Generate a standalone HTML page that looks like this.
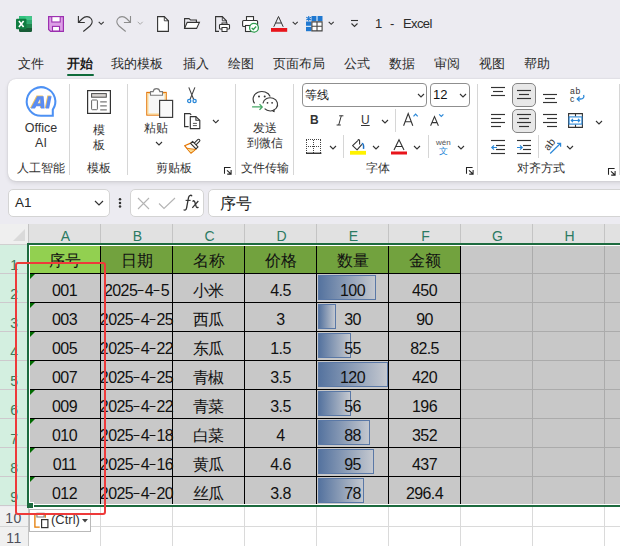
<!DOCTYPE html>
<html><head><meta charset="utf-8">
<style>
*{margin:0;padding:0;box-sizing:border-box}
html,body{width:620px;height:546px;overflow:hidden;background:#ecebf1;font-family:"Liberation Sans",sans-serif;color:#262626}
.a{position:absolute}
svg{position:absolute;overflow:visible}
.tab{position:absolute;top:56px;font-size:13px;line-height:16px;color:#2b2b2b;white-space:nowrap}
.rib{position:absolute;left:8px;top:79px;width:640px;height:102px;background:#fff;border-radius:8px;box-shadow:0 2px 4px rgba(0,0,0,.10),0 0 1.5px rgba(0,0,0,.16)}
.sep{position:absolute;width:1px;background:#d6d6d6}
.lbl{position:absolute;font-size:12px;line-height:14px;color:#333;white-space:nowrap}
.chev{position:absolute}
.box{position:absolute;background:#fff;border:1px solid #c9c9c9;border-radius:4px}
.ch{position:absolute;top:224px;height:19px;background:#e1e1e1;font-size:14px;line-height:24px;padding-left:2px;text-align:center;color:#2b7a62}
.rh{position:absolute;left:0;width:28px;background:#d5efe1;font-size:14px;text-align:right;padding-right:3px;color:#3d7a5b;border-bottom:1px solid #c8c8c8}
.c{position:absolute;font-size:16px;text-align:center;white-space:nowrap;color:#111}
.rhn{font-size:14px;text-align:right;padding-right:10px;color:#3a7a5c;background:#d3efe0}
.rhg{font-size:14px;text-align:right;padding-right:6px;letter-spacing:0.6px;color:#4f4f5a;background:#f0f0f0}
.bar{background:linear-gradient(to right,#55739f,#c4c8cf);border:1px solid #5a78a6}
.hz{font-size:16px}
.nm{letter-spacing:-0.6px}
.hy{display:inline-block;width:7px;height:1.2px;background:#111;vertical-align:5px;margin:0 0.3px 0 0.3px;transform:scaleX(.85)}
</style></head><body>

<!-- ===== Title bar ===== -->
<svg style="left:16px;top:16px" width="16" height="16" viewBox="0 0 16 16">
 <rect x="3" y="0" width="13" height="16" rx="1.2" fill="#185c37"/>
 <path d="M3 1.2 Q3 0 4.2 0 H14.8 Q16 0 16 1.2 V4 H3 Z" fill="#33c481"/>
 <rect x="3" y="4" width="13" height="4" fill="#21a366"/>
 <rect x="3" y="8" width="13" height="4" fill="#107c41"/>
 <rect x="9.5" y="0" width="6.5" height="12" fill="#fff" opacity="0.08"/>
 <rect x="0" y="2.8" width="10.5" height="10.5" rx="1" fill="#107c41"/>
 <path d="M2.9 5 L7.6 11.1 M7.6 5 L2.9 11.1" stroke="#fff" stroke-width="1.6"/>
</svg>
<svg style="left:48px;top:16px" width="16" height="16" viewBox="0 0 16 16">
 <path d="M0.6 0.6 H15.4 V15.4 H2.6 L0.6 13.4 Z" fill="#dc9fe6" stroke="#9c2fb0" stroke-width="1.2"/>
 <rect x="3.8" y="0.6" width="8.4" height="5.4" fill="#fff" stroke="#9c2fb0" stroke-width="1.1"/>
 <rect x="4.5" y="10.4" width="7" height="4.6" fill="#fff" stroke="#9c2fb0" stroke-width="1.1"/>
</svg>
<!-- undo -->
<svg style="left:77px;top:16px" width="16" height="16" viewBox="0 0 16 16">
 <path d="M1.4 0 V6.5 H7.8" fill="none" stroke="#333" stroke-width="1.1"/>
 <path d="M1.4 6.5 L5.5 2.5 C8 0 12 0 14 2.5 C16 5 15 8 13 10 L6.3 15.5" fill="none" stroke="#333" stroke-width="1.1"/>
</svg>
<svg style="left:98px;top:21px" width="7" height="5" viewBox="0 0 7 5"><path d="M0.7 0.8 L3.2 3.3 L5.7 0.8" fill="none" stroke="#333" stroke-width="1.1"/></svg>
<!-- redo -->
<svg style="left:116px;top:16px" width="16" height="16" viewBox="0 0 16 16">
 <path d="M14.5 0 V6.5 H7.9" fill="none" stroke="#8c8c8c" stroke-width="1.1"/>
 <path d="M14.5 6.5 L10.5 2.5 C8 0 4 0 2 2.5 C0 5 1 8 3 10 L9.7 15.5" fill="none" stroke="#8c8c8c" stroke-width="1.1"/>
</svg>
<svg style="left:137px;top:21px" width="7" height="5" viewBox="0 0 7 5"><path d="M0.7 0.8 L3.2 3.3 L5.7 0.8" fill="none" stroke="#aaa" stroke-width="1"/></svg>
<!-- new doc -->
<svg style="left:157px;top:16px" width="12" height="16" viewBox="0 0 12 16">
 <path d="M0.6 0.6 H7.3 L11.4 4.8 V15.4 H0.6 Z" fill="#fff" stroke="#333" stroke-width="1.1"/>
 <path d="M7.3 0.6 V4.8 H11.4" fill="none" stroke="#333" stroke-width="0.9"/>
</svg>
<!-- open -->
<svg style="left:184px;top:18px" width="16" height="11" viewBox="0 0 16 11">
 <path d="M0.6 10.4 V0.6 H5 L6.5 2 H12.4 V4.4" fill="none" stroke="#333" stroke-width="1.1"/>
 <path d="M0.6 10.4 L3.2 4.4 H15.4 L12.6 10.4 Z" fill="#fff" stroke="#333" stroke-width="1.1"/>
</svg>
<!-- print preview -->
<svg style="left:215px;top:16px" width="15" height="16" viewBox="0 0 15 16">
 <path d="M4 15.4 H0.6 V0.6 H7.3 L11.4 4.8 V7" fill="none" stroke="#333" stroke-width="1.1"/>
 <path d="M7.3 0.6 V4.8 H11.4" fill="none" stroke="#333" stroke-width="0.9"/>
 <rect x="7" y="7" width="5" height="2" fill="#fff" stroke="#333" stroke-width="1"/>
 <rect x="4.5" y="8.5" width="10" height="4.5" rx="0.8" fill="#fff" stroke="#333" stroke-width="1.1"/>
 <rect x="7" y="11.5" width="5" height="4" fill="#fff" stroke="#333" stroke-width="1"/>
</svg>
<!-- print with check -->
<svg style="left:242px;top:16px" width="17" height="17" viewBox="0 0 17 17">
 <rect x="4.5" y="0.6" width="7" height="4" fill="#fff" stroke="#333" stroke-width="1.1"/>
 <rect x="0.6" y="4.5" width="15" height="6" rx="1" fill="#fff" stroke="#333" stroke-width="1.1"/>
 <rect x="3.5" y="9.5" width="6" height="6" fill="#fff" stroke="#333" stroke-width="1.1"/>
 <circle cx="12" cy="11.8" r="4.4" fill="#fff" stroke="#2e9e4f" stroke-width="1.3"/>
 <path d="M9.7 11.9 L11.3 13.5 L14.2 10.5" fill="none" stroke="#2e9e4f" stroke-width="1.3"/>
</svg>
<!-- font color -->
<svg style="left:270px;top:16px" width="18" height="17" viewBox="0 0 18 17">
 <path d="M3.8 10.8 L8.5 0.5 L13.2 10.8 M5.6 7 H11.4" fill="none" stroke="#333" stroke-width="1"/>
 <rect x="1" y="12" width="16.2" height="3.8" fill="#e8141b"/>
</svg>
<svg style="left:292px;top:21px" width="7" height="5" viewBox="0 0 7 5"><path d="M0.7 0.8 L3.2 3.3 L5.7 0.8" fill="none" stroke="#333" stroke-width="1.1"/></svg>
<!-- table w/ freeze -->
<svg style="left:306px;top:16px" width="17" height="16" viewBox="0 0 17 16">
 <rect x="5.5" y="0" width="11" height="5" fill="#1f78d1"/>
 <rect x="0" y="5.5" width="5.5" height="9.7" fill="#1f78d1"/>
 <path d="M11 0 V5 M0 10.3 H5.5" stroke="#fff" stroke-width="1"/>
 <path d="M5.9 5.9 H16.1 V14.9 H5.9 Z M11 5.9 V14.9 M5.9 10.3 H16.1" fill="#fff" stroke="#444" stroke-width="1.1"/>
 <path d="M2.7 0 V5.2 M0.3 1.3 L5.1 3.9 M5.1 1.3 L0.3 3.9" stroke="#1f78d1" stroke-width="1.1"/>
</svg>
<svg style="left:328px;top:21px" width="7" height="5" viewBox="0 0 7 5"><path d="M0.7 0.8 L3.2 3.3 L5.7 0.8" fill="none" stroke="#333" stroke-width="1.1"/></svg>
<!-- customize qat -->
<svg style="left:350px;top:19px" width="9" height="9" viewBox="0 0 9 9">
 <path d="M1 1.5 H8" stroke="#333" stroke-width="1.1"/><path d="M1.5 4.5 L4.5 7.5 L7.5 4.5" fill="none" stroke="#333" stroke-width="1.1"/>
</svg>
<div class="a" style="left:375px;top:16px;font-size:13px;line-height:16px;color:#2b2b2b;white-space:pre">1</div><div class="a" style="left:390px;top:16px;font-size:13px;line-height:16px;color:#2b2b2b">-</div><div class="a" style="left:403px;top:16px;font-size:13px;line-height:16px;color:#2b2b2b;letter-spacing:-0.6px">Excel</div>

<!-- ===== Tabs ===== -->
<div class="tab" style="left:18px">文件</div>
<div class="tab" style="left:67px;font-weight:bold;color:#1b1b1b">开始</div>
<div class="a" style="left:67px;top:74px;width:27px;height:2px;background:#0f6b3b;border-radius:1px"></div>
<div class="tab" style="left:111px">我的模板</div>
<div class="tab" style="left:183px">插入</div>
<div class="tab" style="left:228px">绘图</div>
<div class="tab" style="left:273px">页面布局</div>
<div class="tab" style="left:344px">公式</div>
<div class="tab" style="left:389px">数据</div>
<div class="tab" style="left:434px">审阅</div>
<div class="tab" style="left:479px">视图</div>
<div class="tab" style="left:524px">帮助</div>

<!-- ===== Ribbon ===== -->
<div class="rib"></div>
<!-- RIBBON_START -->
<!-- separators -->
<div class="sep" style="left:69px;top:84px;height:91px"></div>
<div class="sep" style="left:127px;top:84px;height:91px"></div>
<div class="sep" style="left:235px;top:84px;height:91px"></div>
<div class="sep" style="left:293px;top:84px;height:91px"></div>
<div class="sep" style="left:477px;top:84px;height:91px"></div>
<div class="sep" style="left:619px;top:84px;height:91px"></div>
<div class="sep" style="left:343px;top:135px;height:23px"></div>
<div class="sep" style="left:395px;top:109px;height:23px"></div>
<div class="sep" style="left:428px;top:135px;height:23px"></div>
<div class="sep" style="left:538px;top:135px;height:23px"></div>

<!-- Office AI -->
<svg style="left:25px;top:86px" width="33" height="33" viewBox="0 0 33 33">
 <path d="M16 29.8 A14.3 14.3 0 1 1 27.8 23.6 L27.8 29.8 Z" fill="#fff" stroke="#4d91f4" stroke-width="2.05" stroke-linejoin="miter"/>
 <g transform="translate(-0.8 -0.6)" fill="#f3c35a"><path fill-rule="evenodd" d="M5.8 22.6 L12.3 10.2 H18.6 L19.6 22.6 H15.9 L15.7 20.3 H11.3 L10 22.6 Z M12.6 17.4 H15.5 L15.2 12.8 Z"/><path d="M20.6 22.6 L23.1 10.2 H26.6 L24.1 22.6 Z"/></g>
 <g fill="#5a8cf2"><path fill-rule="evenodd" d="M5.8 22.6 L12.3 10.2 H18.6 L19.6 22.6 H15.9 L15.7 20.3 H11.3 L10 22.6 Z M12.6 17.4 H15.5 L15.2 12.8 Z"/><path d="M20.6 22.6 L23.1 10.2 H26.6 L24.1 22.6 Z"/></g>
</svg>
<div class="lbl" style="left:24px;top:121px;font-size:12.5px;width:34px;text-align:center">Office</div>
<div class="lbl" style="left:24px;top:136px;font-size:12.5px;width:34px;text-align:center">AI</div>
<div class="lbl" style="left:17px;top:161px">人工智能</div>

<!-- Template -->
<svg style="left:87px;top:90px" width="24" height="24" viewBox="0 0 24 24">
 <rect x="0.6" y="0.6" width="22.8" height="22.8" fill="#fff" stroke="#333" stroke-width="1.2"/>
 <rect x="4.6" y="3.6" width="14.7" height="3.6" fill="#d9d5d2" stroke="#4a4a4a" stroke-width="1"/>
 <rect x="4.6" y="10" width="5.8" height="9.7" rx="0.8" fill="#fff" stroke="#666" stroke-width="1"/>
 <path d="M13.2 11.9 H19.8 M13.2 15.8 H19.8 M13.2 19.9 H19.8" stroke="#7a7a7a" stroke-width="1.3"/>
</svg>
<div class="lbl" style="left:93px;top:123px">模</div>
<div class="lbl" style="left:93px;top:138px">板</div>
<div class="lbl" style="left:87px;top:161px">模板</div>

<!-- Clipboard -->
<svg style="left:145px;top:87px" width="30" height="32" viewBox="0 0 30 32">
 <rect x="1.8" y="5.4" width="19.4" height="22.7" fill="#f7f7f7" stroke="#e46f00" stroke-width="1.1"/>
 <rect x="2.9" y="6.5" width="17.2" height="20.5" fill="none" stroke="#fbd78c" stroke-width="1.1"/>
 <path d="M5.5 8.3 V4.6 H8.2 C8.6 0.6 14.4 0.6 14.8 4.6 H17.5 V8.3 Z" fill="#fff" stroke="#7a7a7a" stroke-width="1.1"/>
 <rect x="14.6" y="13.4" width="13" height="17" fill="#f9f9f9" stroke="#3d3d3d" stroke-width="1.2"/>
</svg>
<div class="lbl" style="left:144px;top:121px">粘贴</div>
<svg style="left:155px;top:141px" width="8" height="5" viewBox="0 0 8 5"><path d="M1 1 L4 4 L7 1" fill="none" stroke="#333" stroke-width="1.1"/></svg>
<!-- scissors -->
<svg style="left:186px;top:87px" width="12" height="16" viewBox="0 0 12 16">
 <path d="M2.8 0.4 L7.6 12.3 M8.9 0.4 L4.1 12.3" stroke="#444" stroke-width="1.1"/>
 <circle cx="3.2" cy="14" r="1.6" fill="#fff" stroke="#2b88d8" stroke-width="1.3"/>
 <circle cx="8.6" cy="14" r="1.6" fill="#fff" stroke="#2b88d8" stroke-width="1.3"/>
</svg>
<!-- copy -->
<svg style="left:184px;top:113px" width="17" height="17" viewBox="0 0 17 17">
 <path d="M4.6 13.6 H0.6 V0.6 H5.9 L7.2 1.9" fill="none" stroke="#333" stroke-width="1.15"/>
 <path d="M6.3 3.6 H11.9 L15.8 7.3 V15.6 H6.3 Z" fill="#fff" stroke="#333" stroke-width="1.15" stroke-linejoin="round"/>
 <path d="M11.9 3.6 V7.3 H15.8" fill="none" stroke="#333" stroke-width="1.05"/>
 <path d="M8.9 10.4 H12.9 M8.9 12.6 H12.9" stroke="#444" stroke-width="0.9"/>
</svg>
<svg style="left:212px;top:119px" width="8" height="5" viewBox="0 0 8 5"><path d="M1 1 L3.8 3.8 L6.6 1" fill="none" stroke="#333" stroke-width="1.15"/></svg>
<!-- format painter -->
<svg style="left:184px;top:139px" width="17" height="16" viewBox="0 0 17 16">
 <path d="M0.6 6.7 L6.7 4.1 L12.2 9.8 L6.9 14.2 Z" fill="#fff" stroke="#e37400" stroke-width="1.15" stroke-linejoin="round"/>
 <path d="M3.2 9.6 L11 10.6 L6.9 13.6 Z" fill="#f9d98e"/>
 <path d="M2.6 9.2 L11.2 10.4" stroke="#e37400" stroke-width="0.9"/>
 <path d="M10.6 5.6 L14.6 1.6" stroke="#333" stroke-width="3.6" stroke-linecap="round"/>
 <path d="M10.6 5.6 L14.6 1.6" stroke="#fff" stroke-width="1.4" stroke-linecap="round"/>
 <path d="M6.6 4.4 L8.6 2.4 L14 7.8 L12 9.8 Z" fill="#fff" stroke="#333" stroke-width="1.15" stroke-linejoin="round"/>
</svg>
<div class="lbl" style="left:156px;top:161px">剪贴板</div>
<svg style="left:224px;top:167px" width="9" height="9" viewBox="0 0 9 9">
 <path d="M0.5 6.8 V0.5 H6.6" fill="none" stroke="#222" stroke-width="1.05"/><path d="M3 3.4 L7 7 M7.1 3 V7.1 H3.2" fill="none" stroke="#222" stroke-width="1.05"/>
</svg>

<!-- WeChat -->
<svg style="left:251px;top:91px" width="28" height="22" viewBox="0 0 28 22">
 <path d="M3.6 12.3 A8.8 7.6 0 1 1 19.2 5.5" fill="none" stroke="#3a3a3a" stroke-width="1.15"/>
 <circle cx="8" cy="5.5" r="1" fill="#333"/><circle cx="13.7" cy="5.5" r="1" fill="#333"/>
 <path d="M11.9 12.3 A7.4 6.6 0 1 1 13.6 17.7" fill="none" stroke="#3a3a3a" stroke-width="1.15"/>
 <path d="M21.2 19.6 L23.2 20.9 L23 18.3" fill="none" stroke="#3a3a3a" stroke-width="1"/>
 <circle cx="16.5" cy="11.8" r="0.9" fill="#333"/><circle cx="21.1" cy="11.8" r="0.9" fill="#333"/>
 <path d="M1.1 15.9 H11 M8.5 13.1 L11.2 15.9 L8.5 18.9" fill="none" stroke="#45a865" stroke-width="1.35"/>
</svg>
<div class="lbl" style="left:253px;top:121px">发送</div>
<div class="lbl" style="left:247px;top:136px">到微信</div>
<div class="lbl" style="left:241px;top:161px">文件传输</div>

<!-- Font group -->
<div class="box" style="left:302px;top:83px;width:125px;height:24px;border-color:#8f8f8f"></div>
<div class="lbl" style="left:305px;top:88px;font-size:12px;color:#111">等线</div>
<svg style="left:417px;top:93px" width="8" height="5" viewBox="0 0 8 5"><path d="M1 1 L4 4 L7 1" fill="none" stroke="#333" stroke-width="1.1"/></svg>
<div class="box" style="left:430px;top:83px;width:40px;height:24px;border-color:#8f8f8f"></div>
<div class="lbl" style="left:433px;top:88px;font-size:13px;color:#111">12</div>
<svg style="left:459px;top:93px" width="8" height="5" viewBox="0 0 8 5"><path d="M1 1 L4 4 L7 1" fill="none" stroke="#333" stroke-width="1.1"/></svg>

<div class="lbl" style="left:310px;top:113px;font-size:12px;font-weight:bold">B</div>
<svg style="left:336px;top:115px" width="8" height="11" viewBox="0 0 8 11"><path d="M3.2 0.8 H7.4 M0.6 10 H4.8 M5.3 0.8 L2.7 10" fill="none" stroke="#333" stroke-width="1"/></svg>
<div class="lbl" style="left:361px;top:113px;font-size:12px;text-decoration:underline">U</div>
<svg style="left:381px;top:119px" width="8" height="5" viewBox="0 0 8 5"><path d="M1 1 L4 4 L7 1" fill="none" stroke="#333" stroke-width="1.1"/></svg>
<svg style="left:403px;top:113px" width="16" height="14" viewBox="0 0 16 14"><path d="M0.6 12.8 L5.2 0.6 L9.8 12.8 M2.2 8.7 H8.2" fill="none" stroke="#333" stroke-width="1.1"/><path d="M10.5 3.4 L12.6 1.2 L14.7 3.4" fill="none" stroke="#2b88d8" stroke-width="1.2"/></svg>
<svg style="left:430px;top:113px" width="16" height="14" viewBox="0 0 16 14"><path d="M0.6 12.8 L4.5 3.6 L8.4 12.8 M1.9 9.6 H7.1" fill="none" stroke="#333" stroke-width="1.05"/><path d="M9.2 1.3 L11.3 3.4 L13.4 1.3" fill="none" stroke="#2b88d8" stroke-width="1.2"/></svg>

<svg style="left:306px;top:139px" width="16" height="16" viewBox="0 0 16 16">
 <path d="M0 0.5 H15 M0 7.5 H15 M0.5 1 V14 M7.5 1 V14 M14.5 1 V14" fill="none" stroke="#444" stroke-width="1" stroke-dasharray="1 1"/>
 <rect x="0" y="13.6" width="15.4" height="1.3" fill="#222"/>
</svg>
<svg style="left:329px;top:145px" width="8" height="5" viewBox="0 0 8 5"><path d="M1 1 L4 4 L7 1" fill="none" stroke="#333" stroke-width="1.1"/></svg>
<svg style="left:350px;top:139px" width="17" height="16" viewBox="0 0 17 16">
 <path d="M7.6 1.8 L2.6 6.7 L7.1 10.9 L11.9 5.3" fill="#fff" stroke="#333" stroke-width="1.1" stroke-linejoin="round"/>
 <path d="M7.6 1.8 Q8.6 -0.4 9.6 1.4 V5.4" fill="none" stroke="#333" stroke-width="1.1"/>
 <path d="M11.8 4.6 C13.3 4.3 13.9 6.5 13.5 9.8" fill="none" stroke="#1a6fc4" stroke-width="1.5"/>
 <rect x="0" y="11.9" width="16" height="3.8" fill="#fff200"/>
</svg>
<svg style="left:372px;top:145px" width="8" height="5" viewBox="0 0 8 5"><path d="M1 1 L4 4 L7 1" fill="none" stroke="#333" stroke-width="1.1"/></svg>
<svg style="left:391px;top:139px" width="16" height="16" viewBox="0 0 16 16">
 <path d="M3 11 L8 0.8 L13 11 M4.8 7.5 H11.2" fill="none" stroke="#333" stroke-width="1.1"/>
 <rect x="0" y="12.5" width="16" height="3" fill="#e8141b"/>
</svg>
<svg style="left:413px;top:145px" width="8" height="5" viewBox="0 0 8 5"><path d="M1 1 L4 4 L7 1" fill="none" stroke="#333" stroke-width="1.1"/></svg>
<div class="lbl" style="left:436px;top:138px;font-size:8px;line-height:9px;color:#555">wén</div>
<div class="lbl" style="left:439px;top:147px;font-size:9px;line-height:9px;color:#2b88d8">文</div>
<svg style="left:457px;top:145px" width="8" height="5" viewBox="0 0 8 5"><path d="M1 1 L4 4 L7 1" fill="none" stroke="#333" stroke-width="1.1"/></svg>
<div class="lbl" style="left:366px;top:161px">字体</div>
<svg style="left:466px;top:167px" width="9" height="9" viewBox="0 0 9 9">
 <path d="M0.5 6.8 V0.5 H6.6" fill="none" stroke="#222" stroke-width="1.05"/><path d="M3 3.4 L7 7 M7.1 3 V7.1 H3.2" fill="none" stroke="#222" stroke-width="1.05"/>
</svg>

<!-- Alignment group -->
<div class="a" style="left:512px;top:83px;width:24px;height:24px;background:#e8e8e8;border:1px solid #858585;border-radius:5px"></div>
<div class="a" style="left:512px;top:109px;width:24px;height:24px;background:#e8e8e8;border:1px solid #858585;border-radius:5px"></div>
<svg style="left:0;top:0" width="620" height="180" viewBox="0 0 620 180"><g stroke="#333" stroke-width="1.15" fill="none"><path d="M491 87.5 H505"/><path d="M493 91.5 H503"/><path d="M491 95.5 H505"/><path d="M517 90.5 H531"/><path d="M519 94.5 H529"/><path d="M517 98.5 H531"/><path d="M543 94.5 H557"/><path d="M545 98.5 H555"/><path d="M543 102.5 H557"/><path d="M491 114.5 H505"/><path d="M491 118.5 H501"/><path d="M491 122.5 H505"/><path d="M491 126.5 H501"/><path d="M517 114.5 H531"/><path d="M519 118.5 H529"/><path d="M517 122.5 H531"/><path d="M519 126.5 H529"/><path d="M543 114.5 H557"/><path d="M547 118.5 H557"/><path d="M543 122.5 H557"/><path d="M547 126.5 H557"/><path d="M491 140.5 H505"/><path d="M496 145.5 H505"/><path d="M496 149.5 H505"/><path d="M491 153.5 H505"/><path d="M517 140.5 H531"/><path d="M523 145.5 H531"/><path d="M523 149.5 H531"/><path d="M517 153.5 H531"/></g>
<path d="M497 147.5 H491.8 M494 145.3 L491.8 147.5 L494 149.7" fill="none" stroke="#2b88d8" stroke-width="1.2"/>
<path d="M517 147.5 H522.2 M520 145.3 L522.2 147.5 L520 149.7" fill="none" stroke="#2b88d8" stroke-width="1.2"/>
</svg>
<svg style="left:569px;top:87px" width="17" height="17" viewBox="0 0 17 17">
 <text x="1" y="7.4" font-family="Liberation Sans" font-size="8.6" letter-spacing="0.6" fill="#333">ab</text>
 <text x="1" y="14.7" font-family="Liberation Sans" font-size="8.6" fill="#333">c</text>
 <path d="M8.3 12 H11.5 C14 12 15.6 10.5 14.6 8" fill="none" stroke="#2b88d8" stroke-width="1.3"/>
 <path d="M10.6 9.6 L8.2 12 L10.6 14.4" fill="none" stroke="#2b88d8" stroke-width="1.3"/>
</svg>
<svg style="left:568px;top:113px" width="16" height="16" viewBox="0 0 16 16">
 <path d="M0.6 0.6 H14.4 V14.4 H0.6 Z M7.5 0.6 V3.6 M7.5 11.4 V14.4" fill="#fff" stroke="#333" stroke-width="1.1"/>
 <rect x="1.1" y="3.9" width="12.8" height="7.2" fill="#fff" stroke="#2b88d8" stroke-width="1.1"/>
 <path d="M3.3 7.5 H11.7 M5 5.8 L3.3 7.5 L5 9.2 M10 5.8 L11.7 7.5 L10 9.2" fill="none" stroke="#2b88d8" stroke-width="1.2"/>
</svg>
<svg style="left:595px;top:120px" width="8" height="5" viewBox="0 0 8 5"><path d="M1 1 L4 4 L7 1" fill="none" stroke="#333" stroke-width="1.1"/></svg>
<svg style="left:544px;top:137px" width="18" height="18" viewBox="0 0 18 18">
 <text x="0" y="0" transform="translate(4.6 14.2) rotate(-52)" font-family="Liberation Sans" font-size="10.5" fill="#333">ab</text>
 <path d="M6.2 16.5 L16.4 6.5 M13.1 6.3 H16.6 V9.8" fill="none" stroke="#2b88d8" stroke-width="1.2"/>
</svg>
<svg style="left:566px;top:145px" width="8" height="5" viewBox="0 0 8 5"><path d="M1 1 L4 4 L7 1" fill="none" stroke="#333" stroke-width="1.1"/></svg>
<div class="lbl" style="left:517px;top:161px">对齐方式</div>
<svg style="left:608px;top:168px" width="9" height="9" viewBox="0 0 9 9">
 <path d="M0.5 6.8 V0.5 H6.6" fill="none" stroke="#222" stroke-width="1.05"/><path d="M3 3.4 L7 7 M7.1 3 V7.1 H3.2" fill="none" stroke="#222" stroke-width="1.05"/>
</svg>
<!-- RIBBON_END -->

<!-- ===== Formula bar ===== -->
<!-- FORMULA_START -->
<div class="box" style="left:8px;top:189px;width:102px;height:28px;border-color:#d4d4d4;border-radius:5px"></div>
<div class="a" style="left:15px;top:195px;font-size:13.5px;line-height:16px;color:#262626">A1</div>
<svg style="left:94px;top:200px" width="10" height="6" viewBox="0 0 10 6"><path d="M1 1 L5 5 L9 1" fill="none" stroke="#333" stroke-width="1.2"/></svg>
<svg style="left:118px;top:197px" width="4" height="12" viewBox="0 0 4 12"><circle cx="2" cy="2.3" r="1.25" fill="#333"/><circle cx="2" cy="5.9" r="1.25" fill="#333"/><circle cx="2" cy="9.5" r="1.25" fill="#333"/></svg>
<div class="box" style="left:130px;top:189px;width:74px;height:28px;border-color:#d4d4d4;border-radius:5px"></div>
<svg style="left:137px;top:197px" width="13" height="13" viewBox="0 0 13 13"><path d="M1 1 L12 12 M12 1 L1 12" stroke="#b4b4b4" stroke-width="1.1"/></svg>
<svg style="left:158px;top:197px" width="18" height="13" viewBox="0 0 18 13"><path d="M1 6.5 L6 11.5 L17 1" fill="none" stroke="#b4b4b4" stroke-width="1.1"/></svg>
<svg style="left:183px;top:194px" width="17" height="18" viewBox="0 0 17 18">
 <path d="M9 2.3 C8.3 0.8 6.3 0.8 5.6 3.2 L3.6 13.8 C3.1 16.3 1.6 16.6 0.6 15.6" fill="none" stroke="#333" stroke-width="1.3"/>
 <path d="M2.6 6.4 H7.6" stroke="#333" stroke-width="1.1"/>
 <path d="M9.6 7.6 C10.6 6.3 11.4 6.6 11.8 8 L13.2 12.6 C13.6 14 14.5 14 15.4 13" fill="none" stroke="#333" stroke-width="1.3"/>
 <path d="M15.3 7 L9.3 13.9" stroke="#333" stroke-width="1.2"/>
</svg>
<div class="box" style="left:208px;top:189px;width:430px;height:28px;border-color:#d4d4d4;border-radius:5px"></div>
<div class="a" style="left:219.5px;top:194px;font-size:16.2px;line-height:18px;color:#1a1a1a">序号</div>
<!-- FORMULA_END -->

<!-- ===== Grid ===== -->
<!-- GRID_START -->
<div class="a" style="left:0;top:224px;width:620px;height:20px;background:#e1e1e1"></div>
<div class="a" style="left:0;top:224px;width:28px;height:21px;background:#efefef;border-bottom:1px solid #d0d0d0"></div>
<svg style="left:13px;top:229px" width="12" height="12" viewBox="0 0 12 12"><path d="M12 0 V12 H0 Z" fill="#dadada"/></svg>
<div class="a" style="left:28px;top:224px;width:1px;height:20px;background:#c4c4c4"></div>
<div class="ch" style="left:29px;width:71px">A</div>
<div class="a" style="left:100px;top:224px;width:1px;height:19px;background:#c4c4c4"></div>
<div class="ch" style="left:101px;width:71px">B</div>
<div class="a" style="left:172px;top:224px;width:1px;height:19px;background:#c4c4c4"></div>
<div class="ch" style="left:173px;width:71px">C</div>
<div class="a" style="left:244px;top:224px;width:1px;height:19px;background:#c4c4c4"></div>
<div class="ch" style="left:245px;width:71px">D</div>
<div class="a" style="left:316px;top:224px;width:1px;height:19px;background:#c4c4c4"></div>
<div class="ch" style="left:317px;width:71px">E</div>
<div class="a" style="left:388px;top:224px;width:1px;height:19px;background:#c4c4c4"></div>
<div class="ch" style="left:389px;width:71px">F</div>
<div class="a" style="left:460px;top:224px;width:1px;height:19px;background:#c4c4c4"></div>
<div class="ch" style="left:461px;width:71px">G</div>
<div class="a" style="left:532px;top:224px;width:1px;height:19px;background:#c4c4c4"></div>
<div class="ch" style="left:533px;width:71px">H</div>
<div class="a" style="left:604px;top:224px;width:1px;height:19px;background:#c4c4c4"></div>
<div class="ch" style="left:605px;width:71px">I</div>
<div class="a" style="left:676px;top:224px;width:1px;height:19px;background:#c4c4c4"></div>
<div class="a rhn" style="left:0;top:245px;width:28px;height:28px;line-height:40px">1</div>
<div class="a" style="left:0;top:273px;width:27px;height:1px;background:#cdc9cd"></div>
<div class="a rhn" style="left:0;top:274px;width:28px;height:28px;line-height:40px">2</div>
<div class="a" style="left:0;top:302px;width:27px;height:1px;background:#cdc9cd"></div>
<div class="a rhn" style="left:0;top:303px;width:28px;height:28px;line-height:40px">3</div>
<div class="a" style="left:0;top:331px;width:27px;height:1px;background:#cdc9cd"></div>
<div class="a rhn" style="left:0;top:332px;width:28px;height:28px;line-height:40px">4</div>
<div class="a" style="left:0;top:360px;width:27px;height:1px;background:#cdc9cd"></div>
<div class="a rhn" style="left:0;top:361px;width:28px;height:28px;line-height:40px">5</div>
<div class="a" style="left:0;top:389px;width:27px;height:1px;background:#cdc9cd"></div>
<div class="a rhn" style="left:0;top:390px;width:28px;height:28px;line-height:40px">6</div>
<div class="a" style="left:0;top:418px;width:27px;height:1px;background:#cdc9cd"></div>
<div class="a rhn" style="left:0;top:419px;width:28px;height:28px;line-height:40px">7</div>
<div class="a" style="left:0;top:447px;width:27px;height:1px;background:#cdc9cd"></div>
<div class="a rhn" style="left:0;top:448px;width:28px;height:28px;line-height:40px">8</div>
<div class="a" style="left:0;top:476px;width:27px;height:1px;background:#cdc9cd"></div>
<div class="a rhn" style="left:0;top:477px;width:28px;height:28px;line-height:40px">9</div>
<div class="a" style="left:0;top:505px;width:27px;height:1px;background:#cdc9cd"></div>
<div class="a rhg" style="left:0;top:507px;width:28px;height:19px;line-height:22px">10</div>
<div class="a" style="left:0;top:526px;width:28px;height:1px;background:#d4d4d4"></div>
<div class="a rhg" style="left:0;top:527px;width:28px;height:19px;line-height:22px">11</div>
<div class="a" style="left:28px;top:507px;width:1px;height:39px;background:#c4c4c4"></div>
<div class="a" style="left:29px;top:507px;width:600px;height:39px;background:#fff"></div>
<div class="a" style="left:29px;top:526px;width:600px;height:1px;background:#dadada"></div>
<div class="a" style="left:100px;top:507px;width:1px;height:39px;background:#dadada"></div>
<div class="a" style="left:172px;top:507px;width:1px;height:39px;background:#dadada"></div>
<div class="a" style="left:244px;top:507px;width:1px;height:39px;background:#dadada"></div>
<div class="a" style="left:316px;top:507px;width:1px;height:39px;background:#dadada"></div>
<div class="a" style="left:388px;top:507px;width:1px;height:39px;background:#dadada"></div>
<div class="a" style="left:460px;top:507px;width:1px;height:39px;background:#dadada"></div>
<div class="a" style="left:532px;top:507px;width:1px;height:39px;background:#dadada"></div>
<div class="a" style="left:604px;top:507px;width:1px;height:39px;background:#dadada"></div>
<div class="a" style="left:29px;top:245px;width:600px;height:260px;background:#fff"></div>
<div class="a" style="left:30px;top:246px;width:600px;height:258px;background:#c8c8c8"></div>
<div class="a" style="left:461px;top:273px;width:170px;height:1px;background:#ababab"></div>
<div class="a" style="left:461px;top:302px;width:170px;height:1px;background:#ababab"></div>
<div class="a" style="left:461px;top:331px;width:170px;height:1px;background:#ababab"></div>
<div class="a" style="left:461px;top:360px;width:170px;height:1px;background:#ababab"></div>
<div class="a" style="left:461px;top:389px;width:170px;height:1px;background:#ababab"></div>
<div class="a" style="left:461px;top:418px;width:170px;height:1px;background:#ababab"></div>
<div class="a" style="left:461px;top:447px;width:170px;height:1px;background:#ababab"></div>
<div class="a" style="left:461px;top:476px;width:170px;height:1px;background:#ababab"></div>
<div class="a" style="left:532px;top:246px;width:1px;height:258px;background:#ababab"></div>
<div class="a" style="left:604px;top:246px;width:1px;height:258px;background:#ababab"></div>
<div class="a" style="left:30px;top:246px;width:70px;height:27px;background:#92d050"></div>
<div class="a" style="left:101px;top:246px;width:359px;height:27px;background:#72a23e"></div>
<div class="a" style="left:30px;top:273px;width:431px;height:1px;background:#000"></div>
<div class="a" style="left:30px;top:302px;width:431px;height:1px;background:#000"></div>
<div class="a" style="left:30px;top:331px;width:431px;height:1px;background:#000"></div>
<div class="a" style="left:30px;top:360px;width:431px;height:1px;background:#000"></div>
<div class="a" style="left:30px;top:389px;width:431px;height:1px;background:#000"></div>
<div class="a" style="left:30px;top:418px;width:431px;height:1px;background:#000"></div>
<div class="a" style="left:30px;top:447px;width:431px;height:1px;background:#000"></div>
<div class="a" style="left:30px;top:476px;width:431px;height:1px;background:#000"></div>
<div class="a" style="left:100px;top:246px;width:1px;height:258px;background:#000"></div>
<div class="a" style="left:172px;top:246px;width:1px;height:258px;background:#000"></div>
<div class="a" style="left:244px;top:246px;width:1px;height:258px;background:#000"></div>
<div class="a" style="left:316px;top:246px;width:1px;height:258px;background:#000"></div>
<div class="a" style="left:388px;top:246px;width:1px;height:258px;background:#000"></div>
<div class="a" style="left:460px;top:246px;width:1px;height:258px;background:#000"></div>
<svg style="left:30px;top:274px" width="5" height="5" viewBox="0 0 5 5"><path d="M0 0 H5 L0 5 Z" fill="#006a00"/></svg>
<svg style="left:30px;top:303px" width="5" height="5" viewBox="0 0 5 5"><path d="M0 0 H5 L0 5 Z" fill="#006a00"/></svg>
<svg style="left:30px;top:332px" width="5" height="5" viewBox="0 0 5 5"><path d="M0 0 H5 L0 5 Z" fill="#006a00"/></svg>
<svg style="left:30px;top:361px" width="5" height="5" viewBox="0 0 5 5"><path d="M0 0 H5 L0 5 Z" fill="#006a00"/></svg>
<svg style="left:30px;top:390px" width="5" height="5" viewBox="0 0 5 5"><path d="M0 0 H5 L0 5 Z" fill="#006a00"/></svg>
<svg style="left:30px;top:419px" width="5" height="5" viewBox="0 0 5 5"><path d="M0 0 H5 L0 5 Z" fill="#006a00"/></svg>
<svg style="left:30px;top:448px" width="5" height="5" viewBox="0 0 5 5"><path d="M0 0 H5 L0 5 Z" fill="#006a00"/></svg>
<svg style="left:30px;top:477px" width="5" height="5" viewBox="0 0 5 5"><path d="M0 0 H5 L0 5 Z" fill="#006a00"/></svg>
<div class="a bar" style="left:318px;top:275px;width:58px;height:25px"></div>
<div class="a bar" style="left:318px;top:304px;width:18px;height:25px"></div>
<div class="a bar" style="left:318px;top:333px;width:33px;height:25px"></div>
<div class="a bar" style="left:318px;top:362px;width:70px;height:25px"></div>
<div class="a bar" style="left:318px;top:391px;width:33px;height:25px"></div>
<div class="a bar" style="left:318px;top:420px;width:52px;height:25px"></div>
<div class="a bar" style="left:318px;top:449px;width:56px;height:25px"></div>
<div class="a bar" style="left:318px;top:478px;width:46px;height:25px"></div>
<div class="c hz" style="left:19px;top:247px;width:91px;height:28px;line-height:28px">序号</div>
<div class="c hz" style="left:91px;top:247px;width:91px;height:28px;line-height:28px">日期</div>
<div class="c hz" style="left:163px;top:247px;width:91px;height:28px;line-height:28px">名称</div>
<div class="c hz" style="left:235px;top:247px;width:91px;height:28px;line-height:28px">价格</div>
<div class="c hz" style="left:307px;top:247px;width:91px;height:28px;line-height:28px">数量</div>
<div class="c hz" style="left:379px;top:247px;width:91px;height:28px;line-height:28px">金额</div>
<div class="c nm" style="left:19px;top:277px;width:91px;height:28px;line-height:28px">001</div>
<div class="c nm" style="left:91px;top:277px;width:91px;height:28px;line-height:28px">2025<span class="hy"></span>4<span class="hy"></span>5</div>
<div class="c nm" style="left:163px;top:277px;width:91px;height:28px;line-height:28px">小米</div>
<div class="c nm" style="left:235px;top:277px;width:91px;height:28px;line-height:28px">4.5</div>
<div class="c nm" style="left:307px;top:277px;width:91px;height:28px;line-height:28px">100</div>
<div class="c nm" style="left:379px;top:277px;width:91px;height:28px;line-height:28px">450</div>
<div class="c nm" style="left:19px;top:306px;width:91px;height:28px;line-height:28px">003</div>
<div class="c nm" style="left:91px;top:306px;width:91px;height:28px;line-height:28px">2025<span class="hy"></span>4<span class="hy"></span>25</div>
<div class="c nm" style="left:163px;top:306px;width:91px;height:28px;line-height:28px">西瓜</div>
<div class="c nm" style="left:235px;top:306px;width:91px;height:28px;line-height:28px">3</div>
<div class="c nm" style="left:307px;top:306px;width:91px;height:28px;line-height:28px">30</div>
<div class="c nm" style="left:379px;top:306px;width:91px;height:28px;line-height:28px">90</div>
<div class="c nm" style="left:19px;top:335px;width:91px;height:28px;line-height:28px">005</div>
<div class="c nm" style="left:91px;top:335px;width:91px;height:28px;line-height:28px">2025<span class="hy"></span>4<span class="hy"></span>22</div>
<div class="c nm" style="left:163px;top:335px;width:91px;height:28px;line-height:28px">东瓜</div>
<div class="c nm" style="left:235px;top:335px;width:91px;height:28px;line-height:28px">1.5</div>
<div class="c nm" style="left:307px;top:335px;width:91px;height:28px;line-height:28px">55</div>
<div class="c nm" style="left:379px;top:335px;width:91px;height:28px;line-height:28px">82.5</div>
<div class="c nm" style="left:19px;top:364px;width:91px;height:28px;line-height:28px">007</div>
<div class="c nm" style="left:91px;top:364px;width:91px;height:28px;line-height:28px">2025<span class="hy"></span>4<span class="hy"></span>25</div>
<div class="c nm" style="left:163px;top:364px;width:91px;height:28px;line-height:28px">青椒</div>
<div class="c nm" style="left:235px;top:364px;width:91px;height:28px;line-height:28px">3.5</div>
<div class="c nm" style="left:307px;top:364px;width:91px;height:28px;line-height:28px">120</div>
<div class="c nm" style="left:379px;top:364px;width:91px;height:28px;line-height:28px">420</div>
<div class="c nm" style="left:19px;top:393px;width:91px;height:28px;line-height:28px">009</div>
<div class="c nm" style="left:91px;top:393px;width:91px;height:28px;line-height:28px">2025<span class="hy"></span>4<span class="hy"></span>22</div>
<div class="c nm" style="left:163px;top:393px;width:91px;height:28px;line-height:28px">青菜</div>
<div class="c nm" style="left:235px;top:393px;width:91px;height:28px;line-height:28px">3.5</div>
<div class="c nm" style="left:307px;top:393px;width:91px;height:28px;line-height:28px">56</div>
<div class="c nm" style="left:379px;top:393px;width:91px;height:28px;line-height:28px">196</div>
<div class="c nm" style="left:19px;top:422px;width:91px;height:28px;line-height:28px">010</div>
<div class="c nm" style="left:91px;top:422px;width:91px;height:28px;line-height:28px">2025<span class="hy"></span>4<span class="hy"></span>18</div>
<div class="c nm" style="left:163px;top:422px;width:91px;height:28px;line-height:28px">白菜</div>
<div class="c nm" style="left:235px;top:422px;width:91px;height:28px;line-height:28px">4</div>
<div class="c nm" style="left:307px;top:422px;width:91px;height:28px;line-height:28px">88</div>
<div class="c nm" style="left:379px;top:422px;width:91px;height:28px;line-height:28px">352</div>
<div class="c nm" style="left:19px;top:451px;width:91px;height:28px;line-height:28px">011</div>
<div class="c nm" style="left:91px;top:451px;width:91px;height:28px;line-height:28px">2025<span class="hy"></span>4<span class="hy"></span>16</div>
<div class="c nm" style="left:163px;top:451px;width:91px;height:28px;line-height:28px">黄瓜</div>
<div class="c nm" style="left:235px;top:451px;width:91px;height:28px;line-height:28px">4.6</div>
<div class="c nm" style="left:307px;top:451px;width:91px;height:28px;line-height:28px">95</div>
<div class="c nm" style="left:379px;top:451px;width:91px;height:28px;line-height:28px">437</div>
<div class="c nm" style="left:19px;top:480px;width:91px;height:28px;line-height:28px">012</div>
<div class="c nm" style="left:91px;top:480px;width:91px;height:28px;line-height:28px">2025<span class="hy"></span>4<span class="hy"></span>20</div>
<div class="c nm" style="left:163px;top:480px;width:91px;height:28px;line-height:28px">丝瓜</div>
<div class="c nm" style="left:235px;top:480px;width:91px;height:28px;line-height:28px">3.8</div>
<div class="c nm" style="left:307px;top:480px;width:91px;height:28px;line-height:28px">78</div>
<div class="c nm" style="left:379px;top:480px;width:91px;height:28px;line-height:28px">296.4</div>
<div class="a" style="left:27px;top:243px;width:600px;height:2px;background:#1d6b3f"></div>
<div class="a" style="left:27px;top:243px;width:2px;height:264px;background:#1d6b3f"></div>
<div class="a" style="left:34px;top:505px;width:600px;height:2px;background:#1d6b3f"></div>
<div class="a" style="left:29px;top:502px;width:5px;height:6px;background:#fff"></div>
<div class="a" style="left:27px;top:503px;width:6px;height:5px;background:#1d6b3f"></div>
<div class="a" style="left:29px;top:509px;width:62px;height:23px;background:#fff;border:1px solid #b9b9b9"></div>
<svg style="left:33px;top:512px" width="16" height="17" viewBox="0 0 16 17"><path d="M1.9 2 V15.2 H6.7" fill="none" stroke="#e37a00" stroke-width="1.3"/><path d="M12.3 2.8 V5.7" stroke="#e37a00" stroke-width="1.2"/><path d="M3.9 5 V1.3 H11.1 V5 Z" fill="#fff" stroke="#7a7a7a" stroke-width="1.1"/><rect x="8.6" y="7.6" width="6.3" height="8" fill="#fff" stroke="#333" stroke-width="1.2"/></svg>
<div class="a" style="left:51px;top:512px;font-size:13px;line-height:16px;color:#333">(Ctrl)</div>
<svg style="left:82px;top:519px" width="6" height="4" viewBox="0 0 6 4"><path d="M0 0 H6 L3 3.5 Z" fill="#444"/></svg>
<div class="a" style="left:15px;top:262px;width:91px;height:253px;border:2px solid #ee3a3a;border-radius:3px"></div>
<!-- GRID_END -->

</body></html>
